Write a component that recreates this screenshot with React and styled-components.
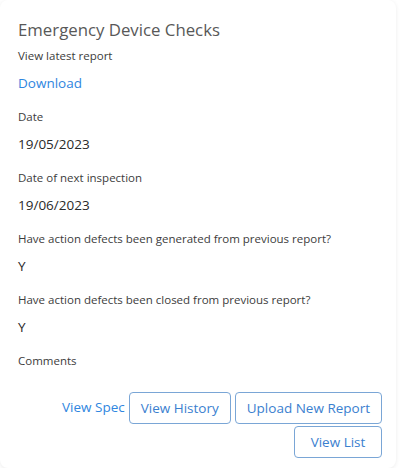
import React from "react";
import styled, { createGlobalStyle } from "styled-components";

const GlobalStyle = createGlobalStyle`
  body {
    margin: 0;
    background: #ffffff;
    font-family: "Open Sans", "Noto Sans", sans-serif;
  }
`;

const Card = styled.div`
  width: 396px;
  box-sizing: border-box;
  padding: 18px 14px 10px 18px;
  background: #ffffff;
  border-radius: 8px;
  box-shadow: 0 1px 4px rgba(0, 0, 0, 0.08);
`;

const Title = styled.h2`
  margin: 0 0 5px;
  font-size: 16.8px;
  line-height: 24px;
  font-weight: 400;
  color: #585858;
`;

const Label = styled.div`
  font-size: 11.5px;
  line-height: 18px;
  color: #3c3c3c;
`;

const Value = styled.div`
  margin: 8px 0 15px;
  font-size: 13.5px;
  line-height: 20px;
  color: ${(p) => (p.link ? "#2f86e0" : "#2a2a2a")};
`;

const Actions = styled.div`
  display: flex;
  flex-wrap: wrap;
  justify-content: flex-end;
  align-items: center;
  gap: 2px 4px;
  width: 364px;
  margin-top: 22px;
`;

const LinkText = styled.span`
  font-size: 13.5px;
  color: #2f86e0;
  margin-bottom: 2px;
`;

const OutlineButton = styled.button`
  height: 32px;
  min-width: ${(p) => (p.wide ? "88px" : "0")};
  padding: 0 11px;
  font-family: inherit;
  font-size: 13.5px;
  color: #3a80cf;
  background: #ffffff;
  border: 1px solid #7aa6d6;
  border-radius: 4px;
`;

const fields = [
  { label: "View latest report", value: "Download", link: true },
  { label: "Date", value: "19/05/2023" },
  { label: "Date of next inspection", value: "19/06/2023" },
  { label: "Have action defects been generated from previous report?", value: "Y" },
  { label: "Have action defects been closed from previous report?", value: "Y" },
];

export default function App() {
  return (
    <>
      <GlobalStyle />
      <Card>
        <Title>Emergency Device Checks</Title>
        {fields.map((f) => (
          <React.Fragment key={f.label}>
            <Label>{f.label}</Label>
            <Value link={f.link}>{f.value}</Value>
          </React.Fragment>
        ))}
        <Label>Comments</Label>
        <Actions>
          <LinkText>View Spec</LinkText>
          <OutlineButton>View History</OutlineButton>
          <OutlineButton>Upload New Report</OutlineButton>
          <OutlineButton wide>View List</OutlineButton>
        </Actions>
      </Card>
    </>
  );
}
